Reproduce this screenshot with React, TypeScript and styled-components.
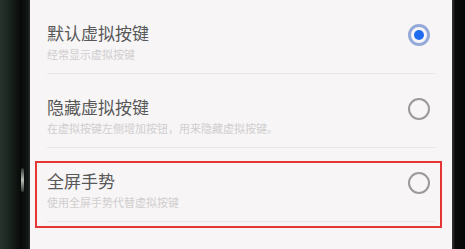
import React from 'react';
import styled, { createGlobalStyle } from 'styled-components';

interface Option {
  title: string;
  desc: string;
  checked: boolean;
  marked?: boolean;
}

const options: Option[] = [
  { title: '默认虚拟按键', desc: '经常显示虚拟按键', checked: true },
  {
    title: '隐藏虚拟按键',
    desc: '在虚拟按键左侧增加按钮，用来隐藏虚拟按键。',
    checked: false,
  },
  {
    title: '全屏手势',
    desc: '使用全屏手势代替虚拟按键',
    checked: false,
    marked: true,
  },
];

const GlobalStyle = createGlobalStyle`
  html, body {
    margin: 0;
    padding: 0;
    background: #0c0f0d;
  }
  body {
    font-family: "Noto Sans CJK SC", "Noto Sans", sans-serif;
  }
`;

const App = () => {
  return (
    <>
      <GlobalStyle />
      <Phone>
        <LeftBezel>
          <Glare />
        </LeftBezel>
        <Screen>
          {options.map((o) => (
            <Row key={o.title}>
              <Texts>
                <Title>{o.title}</Title>
                <Desc>{o.desc}</Desc>
              </Texts>
              <Radio checked={o.checked} />
              {o.marked && <Highlight />}
            </Row>
          ))}
        </Screen>
        <RightBezel />
      </Phone>
    </>
  );
};

const Phone = styled.div`
  display: flex;
  width: 465px;
  height: 249px;
  overflow: hidden;
`;

const LeftBezel = styled.div`
  position: relative;
  width: 30px;
  flex-shrink: 0;
  background: linear-gradient(
    to right,
    #26342b 0%,
    #1b2520 30%,
    #070908 70%,
    #121614 92%,
    #2a2e2c 100%
  );
`;

const Glare = styled.div`
  position: absolute;
  left: 21px;
  top: 168px;
  width: 3px;
  height: 24px;
  border-radius: 2px;
  background: linear-gradient(to bottom, #2e332f, #b9beb9 50%, #2e332f);
`;

const RightBezel = styled.div`
  width: 13px;
  flex-shrink: 0;
  background: linear-gradient(to right, #3a3a3a 0%, #0b0b0b 25%, #060606 100%);
`;

const Screen = styled.div`
  flex: 1;
  display: flex;
  flex-direction: column;
  background: #f7f5f6;
`;

const Row = styled.div`
  position: relative;
  height: 74px;
  box-sizing: border-box;
  margin: 0 17px;
  padding: 22px 5px 0 0;
  display: flex;
  align-items: flex-start;
  justify-content: space-between;
  border-bottom: 1px solid #e9e7e8;
  flex-shrink: 0;
`;

const Texts = styled.div`
  display: flex;
  flex-direction: column;
  gap: 3px;
`;

const Title = styled.div`
  font-size: 17px;
  line-height: 22px;
  color: #585858;
`;

const Desc = styled.div`
  font-size: 11px;
  line-height: 14px;
  color: #d0cecf;
`;

const Radio = styled.span<{ checked: boolean }>`
  width: 22px;
  height: 22px;
  margin-top: 2px;
  box-sizing: border-box;
  border-radius: 50%;
  border: ${(p) => (p.checked ? '3px solid #94a8da' : '2px solid #9a9a9a')};
  display: flex;
  align-items: center;
  justify-content: center;
  &::after {
    content: '';
    display: ${(p) => (p.checked ? 'block' : 'none')};
    width: 10px;
    height: 10px;
    border-radius: 50%;
    background: #1f6cf2;
  }
`;

const Highlight = styled.div`
  position: absolute;
  left: -12px;
  right: -7px;
  top: 13px;
  bottom: -7px;
  border: 2px solid #e53535;
  pointer-events: none;
`;

export default App;
